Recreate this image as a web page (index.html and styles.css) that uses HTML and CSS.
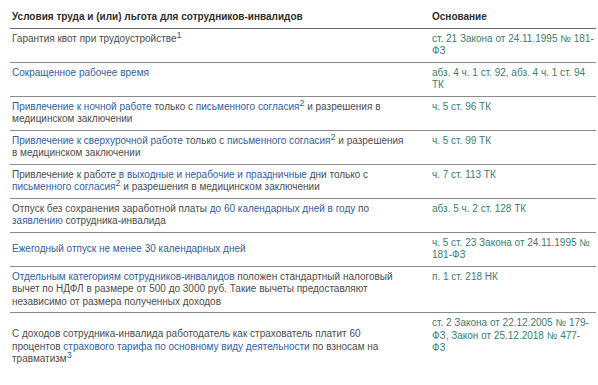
FILE: index.html
```html
<!DOCTYPE html>
<html lang="ru">
<head>
<meta charset="utf-8">
<link rel="stylesheet" href="styles.css">
</head>
<body>
<table class="benefits">
  <colgroup><col class="col-cond"><col class="col-basis"></colgroup>
  <thead>
    <tr><th>Условия труда и (или) льгота для сотрудников-инвалидов</th><th>Основание</th></tr>
  </thead>
  <tbody>
    <tr>
      <td>Гарантия квот при трудоустройстве<sup class="ref">1</sup></td>
      <td class="basis">ст. 21 Закона от 24.11.1995 № 181-<br>ФЗ</td>
    </tr>
    <tr>
      <td><a class="link">Сокращенное рабочее время</a></td>
      <td class="basis">абз. 4 ч. 1 ст. 92, абз. 4 ч. 1 ст. 94<br>ТК</td>
    </tr>
    <tr>
      <td><a class="link">Привлечение к ночной работе</a> только с <a class="link">письменного согласия</a><sup class="ref">2</sup> и разрешения в<br>медицинском заключении</td>
      <td class="basis">ч. 5 ст. 96 ТК</td>
    </tr>
    <tr>
      <td><a class="link">Привлечение к сверхурочной работе</a> только с <a class="link">письменного согласия</a><sup class="ref">2</sup> и разрешения<br>в медицинском заключении</td>
      <td class="basis">ч. 5 ст. 99 ТК</td>
    </tr>
    <tr>
      <td>Привлечение к работе <a class="link">в выходные и нерабочие и праздничные</a> дни только с<br><a class="link">письменного согласия</a><sup class="ref">2</sup> и разрешения в медицинском заключении</td>
      <td class="basis">ч. 7 ст. 113 ТК</td>
    </tr>
    <tr>
      <td>Отпуск без сохранения заработной платы <a class="link">до 60 календарных дней в году</a> по<br><a class="link">заявлению</a> сотрудника-инвалида</td>
      <td class="basis">абз. 5 ч. 2 ст. 128 ТК</td>
    </tr>
    <tr>
      <td class="mid"><a class="link">Ежегодный отпуск не менее 30 календарных дней</a></td>
      <td class="basis">ч. 5 ст. 23 Закона от 24.11.1995 №<br>181-ФЗ</td>
    </tr>
    <tr>
      <td><a class="link">Отдельным категориям сотрудников-инвалидов</a> положен стандартный налоговый<br>вычет по НДФЛ в размере от 500 до 3000 руб. Такие вычеты предоставляют<br>независимо от размера полученных доходов</td>
      <td class="basis">п. 1 ст. 218 НК</td>
    </tr>
    <tr class="last">
      <td class="mid">С доходов сотрудника-инвалида работодатель как страхователь платит 60<br>процентов <a class="link">страхового тарифа по основному виду деятельности</a> по взносам на<br>травматизм<sup class="ref">3</sup></td>
      <td class="basis">ст. 2 Закона от 22.12.2005 № 179-<br>ФЗ, Закон от 25.12.2018 № 477-<br>ФЗ</td>
    </tr>
  </tbody>
</table>
</body>
</html>
```
FILE: styles.css
```css
html, body {
  background: #ffffff;
}
body {
  margin: 7px 2px 0 10px;
  font-family: "Liberation Sans", Arial, sans-serif;
  font-size: 10px;
  line-height: 12.5px;
  color: #4d4d4d;
}
.benefits {
  width: 586px;
  border-collapse: collapse;
  table-layout: fixed;
}
.col-cond { width: 420px; }
.col-basis { width: 166px; }
.benefits th {
  text-align: left;
  font-weight: bold;
  color: #2e2e2e;
  padding: 4px 2px 4px 2px;
  border-bottom: 1px solid #6a6a6a;
  white-space: nowrap;
}
.benefits td {
  vertical-align: top;
  padding: 4px 2px 4px 2px;
  border-bottom: 1px solid #8a8a8a;
  white-space: nowrap;
}
.benefits td.mid {
  vertical-align: middle;
}
.benefits td.basis {
  color: #3b7d70;
}
.benefits tr.last td {
  height: 60px;
  border-bottom: none;
}
.link {
  color: #33609f;
  text-decoration: none;
}
.ref {
  color: #33609f;
  font-size: 9px;
  line-height: 0;
  vertical-align: 4px;
}
```
